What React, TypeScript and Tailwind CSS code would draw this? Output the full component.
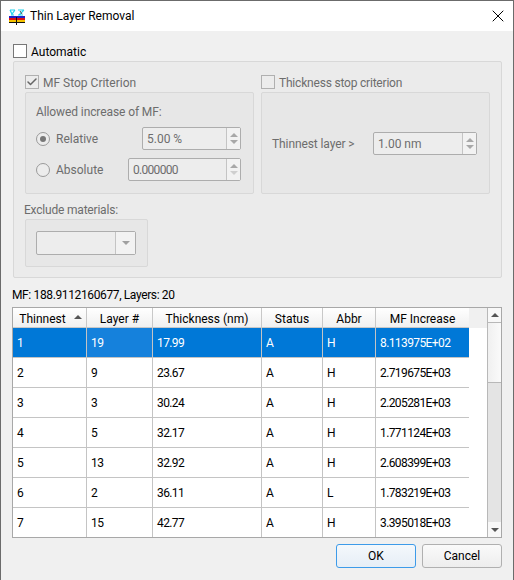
import { Check, X } from 'lucide-react'

const rows = [
  ['1', '19', '17.99', 'A', 'H', '8.113975E+02'],
  ['2', '9', '23.67', 'A', 'H', '2.719675E+03'],
  ['3', '3', '30.24', 'A', 'H', '2.205281E+03'],
  ['4', '5', '32.17', 'A', 'H', '1.771124E+03'],
  ['5', '13', '32.92', 'A', 'H', '2.608399E+03'],
  ['6', '2', '36.11', 'A', 'L', '1.783219E+03'],
  ['7', '15', '42.77', 'A', 'H', '3.395018E+03'],
]

const columns = ['w-[74px]', 'w-[66px]', 'w-[109px]', 'w-[61px]', 'w-[53px]', 'w-[93px]']
const headers = ['Thinnest', 'Layer #', 'Thickness (nm)', 'Status', 'Abbr', 'MF Increase']

function AppIcon() {
  return (
    <svg width="16" height="16" viewBox="0 0 16 16" className="mt-[1px] shrink-0">
      <path d="M1 1h5M1 1l2 4 3-4M2 6h3" stroke="#22d3ee" strokeWidth="1.2" fill="none" />
      <path d="M9 1h6M10 6l5-5M9 6h5" stroke="#22d3ee" strokeWidth="1.2" fill="none" />
      <path d="M11 2l2 3" stroke="#555" strokeWidth="1" fill="none" />
      <rect x="0" y="7" width="16" height="2" fill="#1e22c8" />
      <rect x="0" y="9" width="16" height="2" fill="#e01010" />
      <rect x="0" y="11" width="16" height="2" fill="#f5c400" />
      <rect x="0" y="13" width="16" height="1" fill="#111" />
      <rect x="7" y="8" width="1" height="8" fill="#111" />
    </svg>
  )
}

function Spin({ width, value, dimDown, tight }: { width: string; value: string; dimDown?: boolean; tight?: boolean }) {
  return (
    <div className={`flex h-[23px] ${width} items-stretch rounded-[2px] border border-[#adadad] bg-[#ededed]`}>
      <div className={`flex-1 pl-[4px] leading-[22px] text-[#6d6d6d] ${tight ? 'tracking-[-0.7px]' : ''}`}>{value}</div>
      <div className="flex w-[14px] flex-col items-center justify-center gap-[3px] border-l border-[#c4c4c4] bg-[#f2f2f2]">
        <div className="h-0 w-0 border-x-[4px] border-b-[4px] border-x-transparent border-b-[#a8a8a8]" />
        <div
          className={`h-0 w-0 border-x-[4px] border-t-[4px] border-x-transparent ${dimDown ? 'border-t-[#cfcfcf]' : 'border-t-[#a8a8a8]'}`}
        />
      </div>
    </div>
  )
}

export default function App() {
  return (
    <div
      className="flex h-[580px] w-[514px] flex-col overflow-hidden border-t border-l border-r border-[#6b6b6b] bg-[#f0f0f0] text-[12px] text-black"
      style={{ fontFamily: 'Roboto, "Noto Sans", sans-serif' }}
    >
      {/* Title bar */}
      <div className="flex h-[30px] shrink-0 items-center bg-white pl-[8px] pr-[5px]">
        <AppIcon />
        <span className="ml-[5px] flex-1">Thin Layer Removal</span>
        <X size={20} strokeWidth={1.2} />
      </div>

      <div className="flex min-h-0 flex-1 flex-col px-[12px]">
        {/* Automatic */}
        <label className="mt-[13px] flex h-[14px] items-center">
          <span className="h-[14px] w-[14px] border border-[#777] bg-white" />
          <span className="ml-[4px] pt-[2px]">Automatic</span>
        </label>

        <div className="mt-[3px] h-[217px] w-[489px] rounded-[2px] border border-[#d8d8d8] bg-[#ebebeb] pl-[11px] pt-[13px] text-[#6d6d6d]">
          <div className="flex gap-[7px]">
            {/* MF stop */}
            <div className="w-[229px]">
              <div className="flex h-[14px] items-center">
                <span className="flex h-[14px] w-[14px] items-center justify-center border border-[#b0b0b0] bg-[#ececec]">
                  <Check size={12} strokeWidth={3} className="text-[#666]" />
                </span>
                <span className="ml-[4px] pt-[2px]">MF Stop Criterion</span>
              </div>
              <div className="mt-[3px] h-[102px] rounded-[2px] border border-[#d8d8d8] bg-[#e7e7e7] px-[10px] pt-[10px]">
                <div className="h-[18px] leading-[18px] tracking-[-0.1px]">Allowed increase of MF:</div>
                <div className="mt-[6px] flex h-[23px] items-center">
                  <span className="flex h-[14px] w-[14px] items-center justify-center rounded-full border border-[#9a9a9a] bg-[#ececec]">
                    <span className="h-[6px] w-[6px] rounded-full bg-[#777]" />
                  </span>
                  <span className="ml-[6px] flex-1">Relative</span>
                  <Spin width="w-[99px]" value="5.00 %" />
                  <span className="w-[2px]" />
                </div>
                <div className="mt-[8px] flex h-[23px] items-center">
                  <span className="h-[14px] w-[14px] rounded-full border border-[#9a9a9a] bg-[#ececec]" />
                  <span className="ml-[6px] flex-1">Absolute</span>
                  <Spin width="w-[113px]" value="0.000000" dimDown tight />
                  <span className="w-[2px]" />
                </div>
              </div>
            </div>

            {/* Thickness stop */}
            <div className="w-[229px]">
              <div className="flex h-[14px] items-center">
                <span className="h-[14px] w-[14px] border border-[#b0b0b0] bg-[#ececec]" />
                <span className="ml-[4px] pt-[2px] tracking-[-0.2px]">Thickness stop criterion</span>
              </div>
              <div className="mt-[3px] flex h-[102px] items-center rounded-[2px] border border-[#d8d8d8] bg-[#e7e7e7] pl-[10px] pr-[12px]">
                <span className="flex-1 pt-[2px] tracking-[-0.1px]">Thinnest layer &gt;</span>
                <Spin width="w-[104px]" value="1.00 nm" />
              </div>
            </div>
          </div>

          <div className="-ml-[1px] mt-[7px] h-[18px] leading-[18px] tracking-[-0.2px]">Exclude materials:</div>
          <div className="flex h-[48px] w-[123px] items-center rounded-[2px] border border-[#d8d8d8] bg-[#e7e7e7] pl-[10px]">
            <div className="flex h-[24px] w-[100px] rounded-[2px] border border-[#adadad] bg-[#ededed]">
              <div className="flex-1" />
              <div className="flex w-[20px] items-center justify-center border-l border-[#c4c4c4] bg-[#f2f2f2]">
                <div className="h-0 w-0 border-x-[4px] border-t-[4px] border-x-transparent border-t-[#a0a0a0]" />
              </div>
            </div>
          </div>
        </div>

        <div className="-ml-[1px] mt-[8px] h-[18px] leading-[18px] tracking-[-0.37px]">MF: 188.9112160677, Layers: 20</div>

        {/* Table */}
        <div className="-mx-[1px] mt-[3px] flex h-[231px] w-[490px] shrink-0 border border-[#a8a8a8] bg-white">
          <div className="w-[474px] overflow-hidden">
            <div className="flex h-[20px] bg-[#f0f0f0]">
              {headers.map((header, i) => (
                <div
                  key={header}
                  className={`${columns[i]} relative border-r border-b border-[#c8c8c8] bg-gradient-to-b from-white to-[#f0f0f0] text-center leading-[23px] last:border-r-0`}
                >
                  {i === 0 ? <span className="mr-[14px]">{header}</span> : header}
                  {i === 0 && (
                    <span className="absolute left-[61px] top-[7px] h-0 w-0 border-x-[4px] border-b-[4px] border-x-transparent border-b-[#555]" />
                  )}
                </div>
              ))}
            </div>
            {rows.map((row, r) => (
              <div key={row[0]} className="flex h-[30px]">
                {row.map((cell, i) => (
                  <div
                    key={i}
                    className={`${columns[i]} border-r border-b border-[#c4c4c4] pl-[4px] leading-[31px] tracking-[-0.6px] last:border-r-0 ${
                      r === 0 ? (i === 1 ? 'bg-[#1581dc] text-white' : 'bg-[#0078d7] text-white') : ''
                    }`}
                  >
                    {cell}
                  </div>
                ))}
              </div>
            ))}
          </div>

          {/* Scrollbar */}
          <div className="flex w-[14px] flex-col border-l border-[#b8b8b8] bg-[#f0f0f0]">
            <div className="flex h-[15px] items-center justify-center border-b border-[#b8b8b8] bg-[#f8f8f8]">
              <div className="h-0 w-0 border-x-[4px] border-b-[4px] border-x-transparent border-b-[#555]" />
            </div>
            <div className="h-[60px] border-b border-[#b8b8b8] bg-gradient-to-r from-[#f0f0f0] to-[#fafafa]" />
            <div className="flex-1 bg-[#e4e4e4]" />
            <div className="flex h-[15px] items-center justify-center bg-[#f8f8f8]">
              <div className="h-0 w-0 border-x-[4px] border-t-[4px] border-x-transparent border-t-[#555]" />
            </div>
          </div>
        </div>

        {/* Buttons */}
        <div className="-mr-[1px] mt-[6px] flex justify-end gap-[6px]">
          <button className="h-[24px] w-[80px] rounded-[3px] border border-[#3d9be9] bg-gradient-to-b from-[#f4f8fc] to-[#e6eef6]">
            OK
          </button>
          <button className="h-[24px] w-[80px] rounded-[3px] border border-[#b0b0b0] bg-gradient-to-b from-[#fafafa] to-[#ededed]">
            Cancel
          </button>
        </div>
      </div>
    </div>
  )
}
